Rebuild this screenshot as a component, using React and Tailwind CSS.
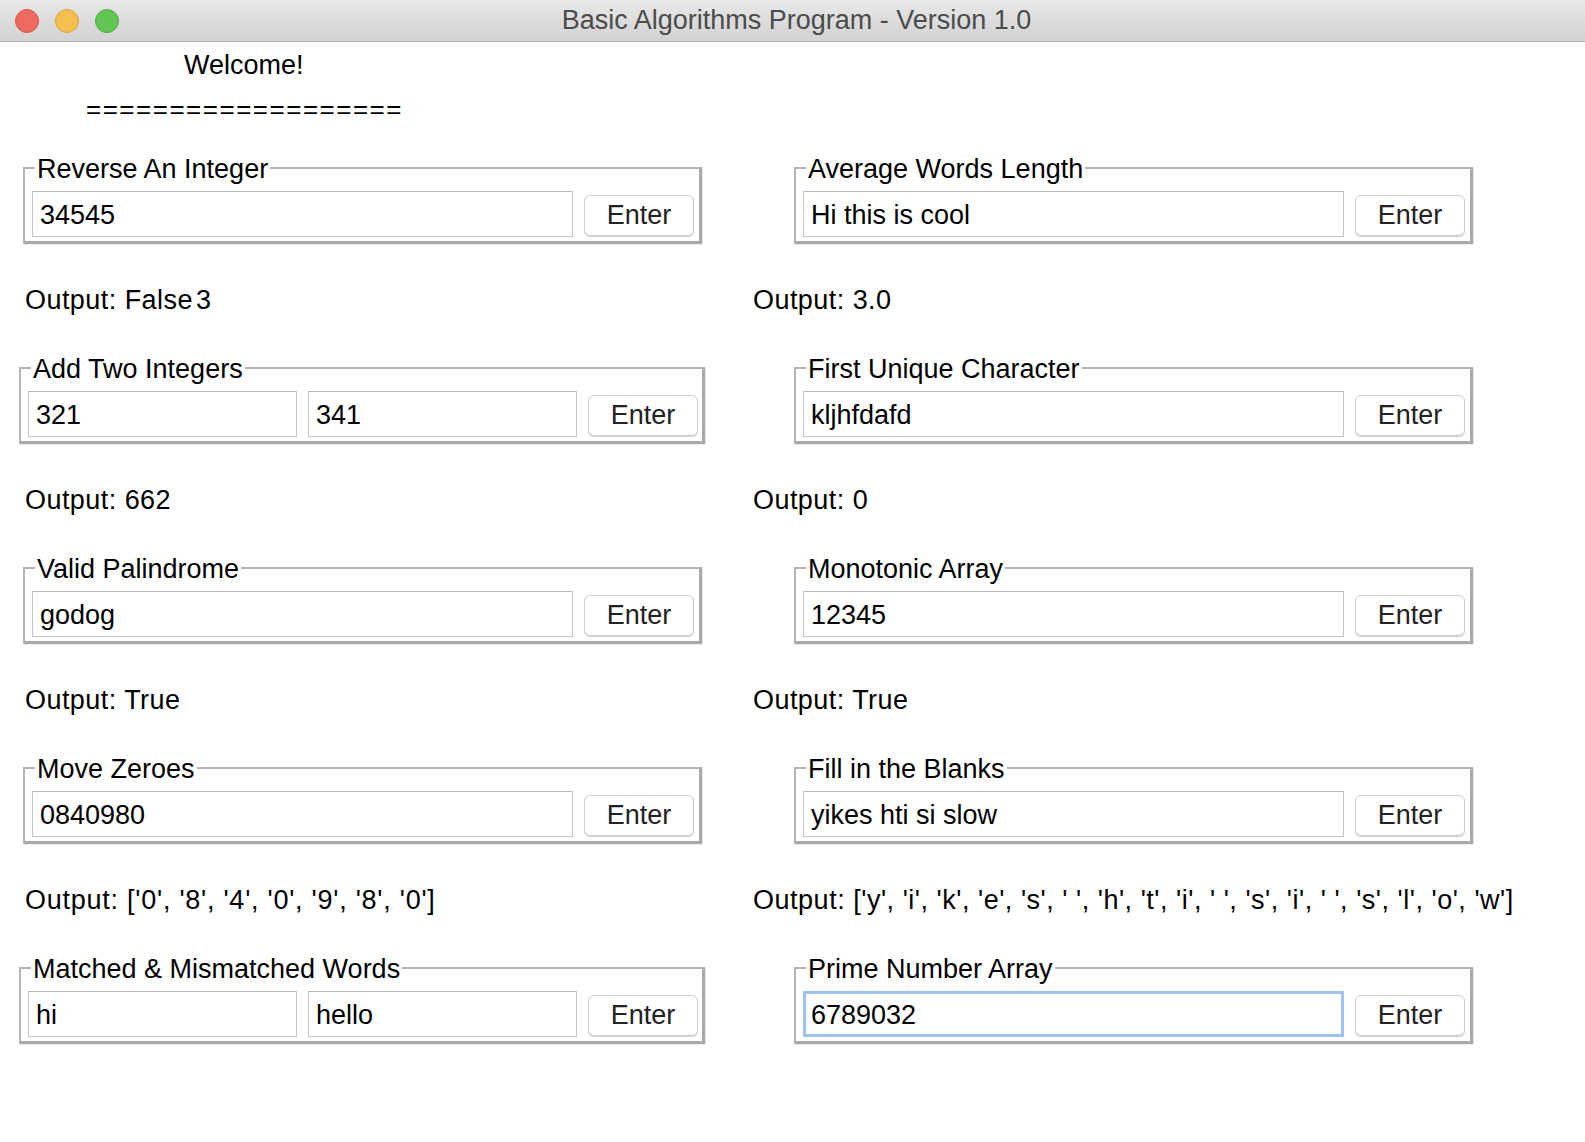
import React from "react";

const font = { fontFamily: '"Liberation Sans", Arial, sans-serif' };

function Field({ value, focused, className = "" }) {
  return (
    <div
      className={
        "h-[46px] flex items-center bg-white whitespace-nowrap overflow-hidden text-black " +
        (focused
          ? "border-[3px] border-[#9cc2f2] pl-[5px] rounded-[1px] "
          : "border border-[#c6c6c6] border-t-[#b9b9b9] pl-[7px] ") +
        className
      }
    >
      <span className="pt-[2px]">{value}</span>
    </div>
  );
}

function EnterButton() {
  return (
    <div className="mt-[4px] h-[41px] w-[110px] shrink-0 rounded-[6px] border border-[#cdcdcd] bg-white shadow-[0_1px_1px_rgba(0,0,0,0.18)] flex items-center justify-center text-[#222]">
      Enter
    </div>
  );
}

function Box({ title, values, focused, double }) {
  return (
    <fieldset
      className={
        "border-t-2 border-l-2 border-r-[3px] border-b-[3px] border-t-[#b4b4b4] border-l-[#b4b4b4] border-r-[#a9a9a9] border-b-[#a9a9a9] shadow-[1px_1px_0_#e9e9e9] pb-[4px] " +
        (double ? "w-[686px] pl-[7px] pr-[4px]" : "w-[679px] pl-[7px] pr-[5px]")
      }
    >
      <legend className="ml-[3px] px-[2px] h-[31px] pt-[4px] leading-[27px] text-black">{title}</legend>
      <div className="pt-[8px] flex items-start gap-[11px]">
        {values.map((v, i) => (
          <Field key={i} value={v} focused={focused} className="flex-1 min-w-0" />
        ))}
        <EnterButton />
      </div>
    </fieldset>
  );
}

function Cell({ title, values, output, double, focused, right, tracking }) {
  return (
    <div>
      <div className={right ? "pl-[41px]" : double ? "pl-[19px]" : "pl-[23px]"}>
        <Box title={title} values={values} double={double} focused={focused} />
      </div>
      {output !== undefined && (
        <div
          className={
            "mt-[41px] mb-[36px] h-[31px] leading-[31px] whitespace-nowrap text-black " +
            (right ? "" : "pl-[25px] ") +
            (tracking || "tracking-[0.45px]")
          }
        >
          {output}
        </div>
      )}
    </div>
  );
}

export default function App() {
  return (
    <div className="w-[1585px] h-[1142px] bg-white overflow-hidden text-[27px]" style={font}>
      <div className="h-[42px] bg-gradient-to-b from-[#e8e8e8] to-[#d2d2d2] border-b border-[#b0b0b0] flex items-center relative">
        <div className="flex items-center gap-[16px] pl-[15px]">
          <div className="w-[24px] h-[24px] rounded-full bg-[#ee6a5e] border border-[#d5584b]" />
          <div className="w-[24px] h-[24px] rounded-full bg-[#f5bf4f] border border-[#d9a33f]" />
          <div className="w-[24px] h-[24px] rounded-full bg-[#62c554] border border-[#4fab42]" />
        </div>
        <div className="absolute inset-0 flex items-center justify-center text-[27px] text-[#4b4b4b] pl-[8px]">
          Basic Algorithms Program - Version 1.0
        </div>
      </div>

      <div className="mt-[8px] h-[31px] leading-[31px] pl-[184px] text-black">Welcome!</div>
      <div className="mt-[13px] h-[31px] leading-[31px] pl-[86px] text-black text-[26px] tracking-[1.5px]">
        ===================
      </div>

      <div className="mt-[27px] grid grid-cols-[753px_1fr]">
        <Cell
          title="Reverse An Integer"
          values={["34545"]}
          output={
            <>
              Output: False<span className="ml-[3px]">3</span>
            </>
          }
        />
        <Cell right title="Average Words Length" values={["Hi this is cool"]} output="Output: 3.0" />

        <Cell double title="Add Two Integers" values={["321", "341"]} output="Output: 662" />
        <Cell right title="First Unique Character" values={["kljhfdafd"]} output="Output: 0" />

        <Cell title="Valid Palindrome" values={["godog"]} output="Output: True" />
        <Cell right title="Monotonic Array" values={["12345"]} output="Output: True" />

        <Cell
          tracking="tracking-[0.75px]"
          title="Move Zeroes"
          values={["0840980"]}
          output="Output: ['0', '8', '4', '0', '9', '8', '0']"
        />
        <Cell
          tracking="tracking-[0.52px]"
          right
          title="Fill in the Blanks"
          values={["yikes hti si slow"]}
          output="Output: ['y', 'i', 'k', 'e', 's', ' ', 'h', 't', 'i', ' ', 's', 'i', ' ', 's', 'l', 'o', 'w']"
        />

        <Cell double title="Matched & Mismatched Words" values={["hi", "hello"]} />
        <Cell right focused title="Prime Number Array" values={["6789032"]} />
      </div>
    </div>
  );
}
